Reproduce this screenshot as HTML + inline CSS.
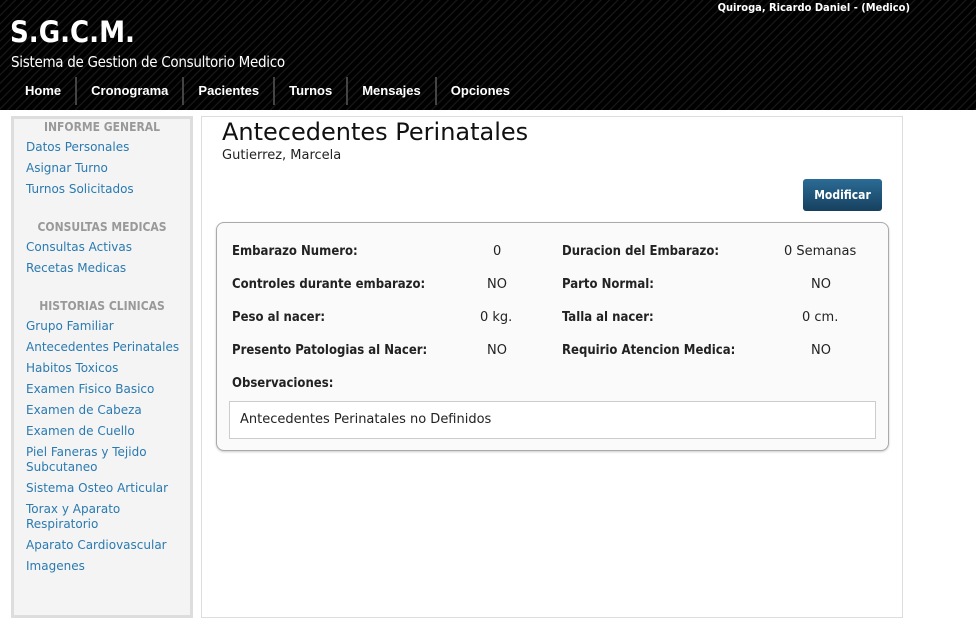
<!DOCTYPE html>
<html><head><meta charset="utf-8"><style>
*{margin:0;padding:0;box-sizing:border-box}
body{width:976px;height:626px;background:#fff;font-family:"DejaVu Sans","Liberation Sans",sans-serif;position:relative;overflow:hidden}
#hd{position:absolute;left:0;top:0;width:976px;height:110px;background:#000 repeating-linear-gradient(135deg,#000 0,#000 4px,#1e1e1e 5px,#000 6px)}
#user{position:absolute;right:66px;top:1px;color:#fff;font:bold 11px "DejaVu Sans Condensed","DejaVu Sans",sans-serif}
#logo{position:absolute;left:10px;top:15px;color:#fff;font:bold 29px "DejaVu Sans Condensed","DejaVu Sans",sans-serif}
#sub{position:absolute;left:11px;top:53px;color:#fff;font:15px "DejaVu Sans Condensed","DejaVu Sans",sans-serif;letter-spacing:-.3px}
#nav{position:absolute;left:11px;top:77px;height:28px;display:flex}
#nav a{color:#fff;font:bold 13px "Liberation Sans",Arial,sans-serif;padding:0 14px;line-height:28px;border-left:2px solid #444}
#nav a:first-child{border-left:none}
#side{position:absolute;left:11px;top:116px;width:182px;height:502px;background:#f4f4f4;border:3px solid #ddd}
#side h4{text-align:center;color:#999;font:bold 12px "DejaVu Sans Condensed","DejaVu Sans",sans-serif;margin-top:1px;height:20px}
#side a{display:block;color:#2a7ab0;font-size:12px;padding-left:12px;line-height:15px;margin-bottom:6px;text-decoration:none}
.sp{height:16px}
#main{position:absolute;left:201px;top:116px;width:702px;height:502px;border:1px solid #ddd}
h1{position:absolute;left:20px;top:1px;font:normal 24px "DejaVu Sans",sans-serif;color:#111}
#pat{position:absolute;left:20px;top:31px;font-size:13px;color:#222}
#btn{position:absolute;left:601px;top:62px;width:79px;height:32px;background:linear-gradient(#2b6b95,#17405f);border-radius:3px;color:#fff;font:bold 12px "DejaVu Sans Condensed","DejaVu Sans",sans-serif;text-align:center;line-height:32px}
#box{position:absolute;left:14px;top:105px;width:673px;height:229px;border:1px solid #aaa;border-radius:8px;background:#fafafa;box-shadow:0 1px 2px #ccc}
.r{position:absolute;font-size:13px;color:#222;top:1px}
.b{font-weight:bold;font-family:"DejaVu Sans Condensed","DejaVu Sans",sans-serif}
#obs{position:absolute;left:12px;top:178px;width:647px;height:38px;border:1px solid #ccc;background:#fff;font-size:13px;padding-left:10px;line-height:36px;color:#222}
.row{position:absolute;left:0;width:100%;height:20px}
</style></head><body>
<div id="hd"><div id="user">Quiroga, Ricardo Daniel - (Medico)</div><div id="logo">S.G.C.M.</div><div id="sub">Sistema de Gestion de Consultorio Medico</div>
<div id="nav"><a>Home</a><a>Cronograma</a><a>Pacientes</a><a>Turnos</a><a>Mensajes</a><a>Opciones</a></div></div>
<div id="side">
<h4>INFORME GENERAL</h4><a>Datos Personales</a><a>Asignar Turno</a><a>Turnos Solicitados</a>
<div class="sp"></div><h4>CONSULTAS MEDICAS</h4><a>Consultas Activas</a><a>Recetas Medicas</a>
<div class="sp"></div><h4>HISTORIAS CLINICAS</h4><a>Grupo Familiar</a><a>Antecedentes Perinatales</a><a>Habitos Toxicos</a><a>Examen Fisico Basico</a><a>Examen de Cabeza</a><a>Examen de Cuello</a><a>Piel Faneras y Tejido Subcutaneo</a><a>Sistema Osteo Articular</a><a>Torax y Aparato Respiratorio</a><a>Aparato Cardiovascular</a><a>Imagenes</a>
</div>
<div id="main"><h1>Antecedentes Perinatales</h1><div id="pat">Gutierrez, Marcela</div><div id="btn">Modificar</div>
<div id="box">
<div class="row" style="top:20px"><div class="r b" style="left:15px">Embarazo Numero:</div><div class="r" style="left:276px">0</div><div class="r b" style="left:345px">Duracion del Embarazo:</div><div class="r" style="left:567px">0 Semanas</div></div>
<div class="row" style="top:53px"><div class="r b" style="left:15px">Controles durante embarazo:</div><div class="r" style="left:270px">NO</div><div class="r b" style="left:345px">Parto Normal:</div><div class="r" style="left:594px">NO</div></div>
<div class="row" style="top:86px"><div class="r b" style="left:15px">Peso al nacer:</div><div class="r" style="left:263px">0 kg.</div><div class="r b" style="left:345px">Talla al nacer:</div><div class="r" style="left:585px">0 cm.</div></div>
<div class="row" style="top:119px"><div class="r b" style="left:15px">Presento Patologias al Nacer:</div><div class="r" style="left:270px">NO</div><div class="r b" style="left:345px">Requirio Atencion Medica:</div><div class="r" style="left:594px">NO</div></div>
<div class="row" style="top:152px"><div class="r b" style="left:15px">Observaciones:</div></div>
<div id="obs">Antecedentes Perinatales no Definidos</div>
</div></div>
</body></html>
